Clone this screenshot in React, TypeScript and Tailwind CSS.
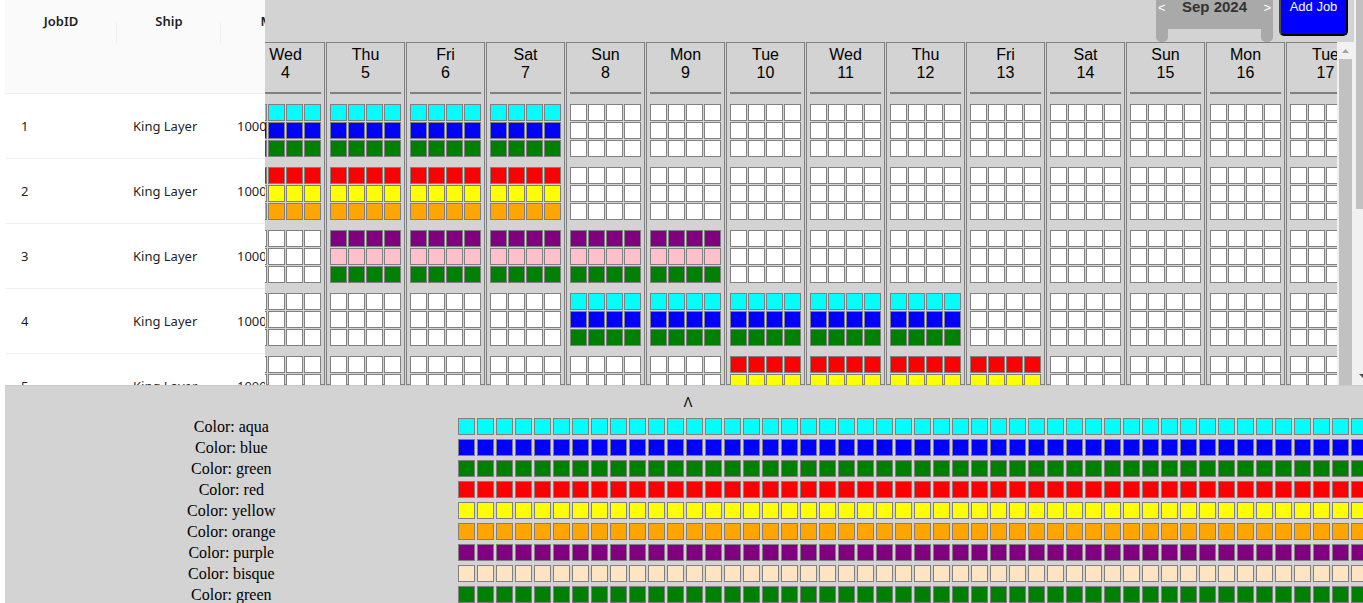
const FILL: Record<string, string> = {
  aqua: "bg-[aqua]",
  blue: "bg-[blue]",
  green: "bg-[green]",
  red: "bg-[red]",
  yellow: "bg-[yellow]",
  orange: "bg-[orange]",
  purple: "bg-[purple]",
  pink: "bg-[pink]",
  bisque: "bg-[bisque]",
  none: "bg-white",
};

type Job = { id: number; from: number; to: number; colors: string[] };

const JOBS: Job[] = [
  { id: 1, from: 4, to: 7, colors: ["aqua", "blue", "green"] },
  { id: 2, from: 4, to: 7, colors: ["red", "yellow", "orange"] },
  { id: 3, from: 5, to: 9, colors: ["purple", "pink", "green"] },
  { id: 4, from: 8, to: 12, colors: ["aqua", "blue", "green"] },
  { id: 5, from: 10, to: 13, colors: ["red", "yellow", "orange"] },
];

// September 2024 starts on a Sunday.
const WEEKDAYS = ["Sun", "Mon", "Tue", "Wed", "Thu", "Fri", "Sat"];
const DAYS = Array.from({ length: 14 }, (_, i) => i + 4);
const LEGEND = ["aqua", "blue", "green", "red", "yellow", "orange", "purple", "bisque", "green"];

function Cell({ color }: { color: string }) {
  return <div className={`size-[17px] shrink-0 border border-[gray] ${FILL[color]}`} />;
}

function JobTable() {
  return (
    <div className="w-[260px] shrink-0 overflow-hidden bg-white font-['Noto_Sans',sans-serif] text-[13px] text-black/90">
      <table className="w-80 table-fixed border-separate border-spacing-0">
        <thead>
          <tr className="bg-[#fafafa]">
            {["JobID", "Ship", "Mat"].map((name) => (
              <th
                key={name}
                className="h-[94px] w-[104px] border-b border-[#f0f0f0] p-0 align-top font-semibold first:w-28"
              >
                <div className="flex flex-col pt-[10px]">
                  <span className="leading-[22px]">{name}</span>
                  <span className="-mt-[10px] h-[22px] border-r border-[#f0f0f0]" />
                </div>
              </th>
            ))}
          </tr>
        </thead>
        <tbody>
          {JOBS.map((job) => (
            <tr key={job.id}>
              <td className="h-[65px] border-b border-[#f0f0f0] px-4 pt-0.5">{job.id}</td>
              <td className="border-b border-[#f0f0f0] px-4 pt-0.5">King Layer</td>
              <td className="border-b border-[#f0f0f0] px-4 pt-0.5">1000</td>
            </tr>
          ))}
        </tbody>
      </table>
    </div>
  );
}

function DayColumn({ day }: { day: number }) {
  return (
    <div className="flex w-[79px] shrink-0 flex-col border border-[gray] px-[3px] pt-[3px]">
      <div className="h-[46px] shrink-0 text-center text-base leading-[18px]">
        <div>{WEEKDAYS[(day + 6) % 7]}</div>
        <div>{day}</div>
      </div>
      <div className="h-0.5 shrink-0 bg-[gray]" />
      <div className="flex flex-col gap-[10px] pt-[10px]">
        {JOBS.map((job) => (
          <div key={job.id} className="flex flex-col gap-px">
            {job.colors.map((color, i) => (
              <div key={i} className="flex gap-px">
                {[0, 1, 2, 3].map((n) => (
                  <Cell key={n} color={day >= job.from && day <= job.to ? color : "none"} />
                ))}
              </div>
            ))}
          </div>
        ))}
      </div>
    </div>
  );
}

function Toolbar() {
  return (
    <div className="flex h-[42px] shrink-0 justify-end gap-[6px] pr-[6px]">
      <div className="flex w-[117px] flex-col">
        <div className="flex h-[29px] items-start justify-between bg-[darkgray] px-[2px] text-[13px] text-white">
          <button aria-label="Previous month" className="leading-[15px]">&lt;</button>
          <span className="text-[15px] leading-[14px] font-bold text-[#333]">Sep 2024</span>
          <button aria-label="Next month" className="leading-[15px]">&gt;</button>
        </div>
        <div className="flex h-[13px] justify-between">
          <div className="w-3 rounded-b-[5px] bg-[darkgray]" />
          <div className="w-3 rounded-b-[5px] bg-[darkgray]" />
        </div>
      </div>
      <button className="h-9 w-[69px] rounded-b-[5px] border-2 border-t-0 border-l-[#4c4c4c] border-r-black border-b-black bg-[blue] pb-5 text-[13px] leading-[14px] whitespace-nowrap text-white">
        Add Job
      </button>
    </div>
  );
}

function Schedule() {
  return (
    <div className="flex min-w-0 flex-1 flex-col bg-[lightgray]">
      <Toolbar />
      <div className="flex min-h-0 flex-1">
        <div className="flex min-w-0 flex-1 overflow-hidden">
          <div className="-ml-[19px] flex gap-px">
            {DAYS.map((day) => (
              <DayColumn key={day} day={day} />
            ))}
          </div>
        </div>
        <div className="flex w-[17px] shrink-0 flex-col items-center bg-[#f1f1f1]">
          <svg className="h-[17px] w-[17px] shrink-0" viewBox="0 0 17 17" fill="#a3a3a3">
            <path d="M5 11 8.500 7 12 11Z" />
          </svg>
          <div className="w-[13px] flex-1 bg-[#c1c1c1]" />
        </div>
      </div>
    </div>
  );
}

function ColorLegend() {
  return (
    <div className="h-[218px] shrink-0 overflow-hidden border-t border-[#c8c8c8] bg-[lightgray]">
      <div className="flex h-[31px] items-center justify-center pl-2">
        <button aria-label="Expand colors" className="font-['Noto_Sans',sans-serif] text-sm leading-none">
          Λ
        </button>
      </div>
      <div className="flex flex-col gap-1">
        {LEGEND.map((color, row) => (
          <div key={row} className="grid h-[17px] grid-cols-3 items-center">
            <span className="pt-0.5 text-center font-['Liberation_Serif',serif] text-base leading-4">
              Color: {color}
            </span>
            <div className="col-span-2 flex gap-0.5 overflow-hidden">
              {Array.from({ length: 56 }, (_, n) => (
                <Cell key={n} color={color} />
              ))}
            </div>
          </div>
        ))}
      </div>
    </div>
  );
}

export default function App() {
  return (
    <main className="flex h-screen flex-col overflow-hidden bg-white pl-[5px] font-['Liberation_Sans',sans-serif] text-black">
      <section className="flex min-h-0 flex-1 overflow-hidden">
        <JobTable />
        <Schedule />
        <div className="flex w-[9px] shrink-0 flex-col bg-[#f1f1f1] pl-0.5">
          <div className="h-[209px] bg-[#c1c1c1]" />
          <div className="flex-1" />
          <svg className="h-[15px] w-[7px]" viewBox="0 0 7 15" fill="#505050">
            <path d="M3 4H10L7 8Z" />
          </svg>
        </div>
      </section>
      <ColorLegend />
    </main>
  );
}
